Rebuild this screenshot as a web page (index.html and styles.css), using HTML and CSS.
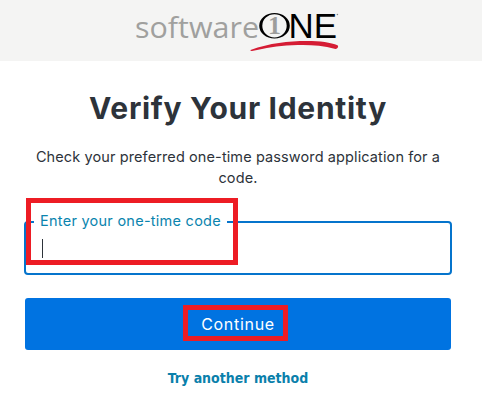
FILE: index.html
```html
<!DOCTYPE html>
<html lang="en">
<head>
<meta charset="utf-8">
<title>Verify Your Identity</title>
<link rel="stylesheet" href="styles.css">
</head>
<body>
<header class="brand">
  <svg class="logo" viewBox="0 0 220 61" width="220" height="61" role="img" aria-label="softwareONE">
    <text class="logo-soft" x="5" y="37.5" textLength="124" lengthAdjust="spacingAndGlyphs">software</text>
    <path fill="#000" fill-rule="evenodd" d="M144.5 13a15.3 12.8 0 1 0 0 25.6a15.3 12.8 0 1 0 0-25.6M144.5 14.2a12.2 11.6 0 1 1 0 23.2a12.2 11.6 0 1 1 0-23.2"/>
    <text class="logo-one" x="138" y="33.5" textLength="13" lengthAdjust="spacingAndGlyphs">1</text>
    <text class="logo-ne" x="158.5" y="37.6" textLength="48.5" lengthAdjust="spacingAndGlyphs">NE</text>
    <circle cx="207.4" cy="14.5" r=".8" fill="#888"/>
    <path fill="#d51c34" d="M120.5 50C140 43 158 41 177 41C190 41 201 42.5 207.5 45.3C209 46.5 207.5 49 205.5 48.9C190 44.8 177 44.6 162 45.2C147 45.8 136 48 122 50.9Q120 51 120.5 50Z"/>
  </svg>
</header>
<main class="card">
  <h1 class="title">Verify Your Identity</h1>
  <p class="hint"><span class="hint-first">Check your preferred one-time password application for a</span> code.</p>
  <div class="field">
    <label class="field-label">Enter your one-time code</label>
    <span class="caret"></span>
    <span class="mark mark-field"></span>
  </div>
  <button class="submit" type="button"><span class="submit-text">Continue</span><span class="mark mark-submit"></span></button>
  <a class="alternate"><span>Try another method</span></a>
</main>
</body>
</html>
```
FILE: styles.css
```css
* { box-sizing: border-box; }
body {
  margin: 0;
  background: #fff;
  color: #2d333a;
  font-family: Inter, "Liberation Sans", sans-serif;
}
.brand {
  height: 61px;
  padding-left: 130px;
  background: #f4f4f3;
}
.logo { display: block; }
.logo-soft { font: 29.5px "Open Sans", sans-serif; fill: #a0a09e; }
.logo-one { font: bold 26px "Liberation Serif", serif; fill: #9d9d9b; }
.logo-ne { font: 37px "Liberation Sans", sans-serif; font-size: 35px; fill: #000; }
.card {
  display: flex;
  flex-direction: column;
  padding: 28px 30px 0 24px;
}
.title {
  margin: 0;
  font-size: 30px;
  line-height: 38px;
  font-weight: 700;
  text-align: center;
  letter-spacing: .7px;
  white-space: nowrap;
}
.hint {
  margin: 19px 0 0;
  font-size: 14.5px;
  line-height: 21px;
  text-align: center;
  letter-spacing: .11px;
}
.hint-first { display: block; white-space: nowrap; }
.field {
  position: relative;
  height: 54px;
  margin-top: 33px;
  border: 2px solid #0574cc;
  border-radius: 4px;
}
.field-label {
  position: absolute;
  left: 8px;
  top: -12px;
  padding: 0 6px;
  background: #fff;
  color: #0a84ae;
  font-size: 14.5px;
  line-height: 20px;
  white-space: nowrap;
  letter-spacing: .26px;
}
.caret {
  position: absolute;
  left: 16px;
  top: 16px;
  width: 1px;
  height: 19px;
  background: #2d333a;
}
.mark { position: absolute; border: 5px solid #ed1c24; }
.mark-field { left: 0; top: -25px; width: 212px; height: 67px; }
.submit {
  position: relative;
  height: 52px;
  margin: 23px 1px 0;
  padding: 1px 0 0;
  border: 0;
  border-radius: 3px;
  background: #0073e1;
  color: #fff;
  font: 16px/51px Inter, sans-serif;
  letter-spacing: .7px;
}
.mark-submit { left: 158px; top: 7px; width: 105px; height: 36px; }
.alternate {
  margin-top: 18px;
  color: #0a80ab;
  font: bold 14px/20px "DejaVu Sans Condensed", "DejaVu Sans", sans-serif;
  text-align: center;
}
```
